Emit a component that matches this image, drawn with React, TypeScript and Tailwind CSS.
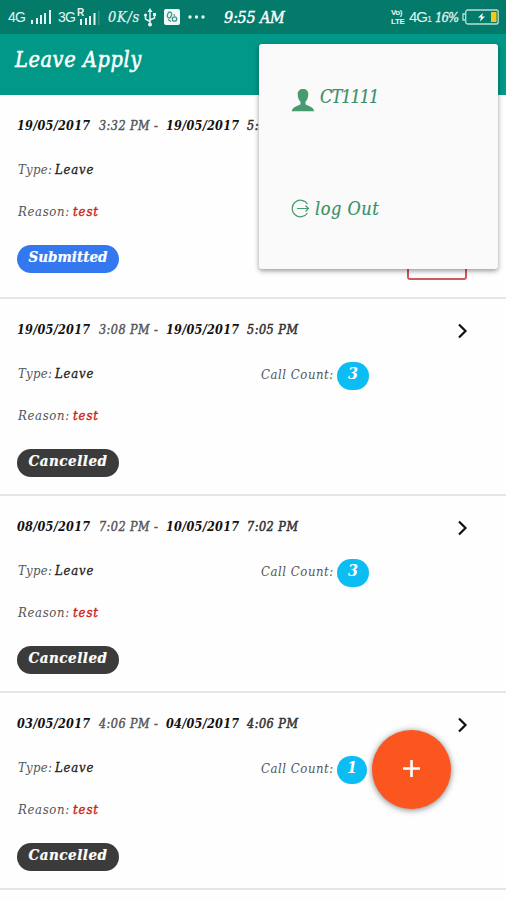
import React from 'react';

interface LeaveEntry {
    from: string;
    fromTime: string;
    to: string;
    toTime: string;
    status: 'Submitted' | 'Cancelled';
    calls?: number;
}

const LEAVES: LeaveEntry[] = [
    { from: '19/05/2017', fromTime: '3:32 PM -', to: '19/05/2017', toTime: '5:32 PM', status: 'Submitted' },
    { from: '19/05/2017', fromTime: '3:08 PM -', to: '19/05/2017', toTime: '5:05 PM', status: 'Cancelled', calls: 3 },
    { from: '08/05/2017', fromTime: '7:02 PM -', to: '10/05/2017', toTime: '7:02 PM', status: 'Cancelled', calls: 3 },
    { from: '03/05/2017', fromTime: '4:06 PM -', to: '04/05/2017', toTime: '4:06 PM', status: 'Cancelled', calls: 1 },
];

const StatusBar: React.FC = () => (
    <div className="flex h-[34px] items-center bg-[#047a6b] pl-2 pr-[7px] whitespace-nowrap text-[#e3f5f2]">
        <span className="w-[22px] font-['Liberation_Sans'] text-[14px] not-italic tracking-[-0.8px]">4G</span>
        <svg width="22" height="16" viewBox="0 0 22 16" fill="currentColor">
            <path d="M1 11h2v4H1zM6 9h2v6H6zM10 6h2v9h-2zM14 4h2v11h-2zM19 1h2v14h-2z" />
        </svg>
        <span className="ml-[6px] w-[18px] font-['Liberation_Sans'] text-[14px] not-italic tracking-[-0.8px]">3G</span>
        <div className="relative h-5 w-[26px]">
            <span className="absolute left-[1px] top-0 font-['Liberation_Sans'] text-[10px] leading-[11px] not-italic font-bold">R</span>
            <svg className="absolute left-0 top-0" width="24" height="20" fill="currentColor">
                <path d="M4 12h2v6H4zM9 11h2v7H9zM13 9h2v9h-2z" />
                <path d="M17.500 6h2v12h-2z" />
                <path opacity=".2" d="M22 4h1.500v14H22z" />
            </svg>
        </div>
        <span className="ml-[6px] w-[34px] pt-px text-[14.500px] tracking-[0.7px] [-webkit-text-stroke:0.2px]">0K/s</span>
        <svg className="ml-[1px]" width="14" height="19" viewBox="0 0 14 19" fill="none" stroke="currentColor" strokeWidth="1.500">
            <path d="M7 3v13M7 13.500L2.500 11V7.500M7 12l4.500-2V6.500" />
            <path d="M7 0l2.500 4h-5z" fill="currentColor" stroke="none" />
            <circle cx="7" cy="16.500" r="2" fill="currentColor" stroke="none" />
            <circle cx="2.500" cy="7" r="1.600" fill="currentColor" stroke="none" />
            <path d="M10 5h3v3h-3z" fill="currentColor" stroke="none" />
        </svg>
        <svg className="ml-[7px]" width="16" height="16" viewBox="0 0 16 16">
            <rect width="16" height="16" rx="2" fill="#f2fbfa" />
            <g fill="none" stroke="#3c9488" strokeWidth="1.300">
                <ellipse cx="5.500" cy="6" rx="2" ry="3" transform="rotate(15 5.500 6)" />
                <circle cx="10.500" cy="10" r="2.200" />
                <path d="M4 10.500l3 2M9.500 5.500l1.500 1" />
            </g>
        </svg>
        <svg className="ml-[8px]" width="17" height="4" viewBox="0 0 17 4" fill="currentColor">
            <circle cx="2" cy="2" r="1.700" />
            <circle cx="8.500" cy="2" r="1.700" />
            <circle cx="15" cy="2" r="1.700" />
        </svg>
        <span className="ml-[19px] pt-px text-[16px] tracking-[-0.2px] text-white [-webkit-text-stroke:0.4px]">9:55 AM</span>
        <div className="ml-auto flex items-center">
            <div className="flex w-[16px] flex-col font-['Liberation_Sans'] text-[8px] leading-[9px] font-bold not-italic tracking-[-0.4px]">
                <span>Vo)</span>
                <span>LTE</span>
            </div>
            <span className="ml-[2px] w-[24px] font-['Liberation_Sans'] text-[15px] not-italic tracking-[-1px]">
                4G<span className="text-[9px]">1</span>
            </span>
            <span className="ml-[2px] w-[24px] pt-px text-[13px] tracking-[-1px] [-webkit-text-stroke:0.3px]">16%</span>
            <svg className="ml-[3px]" width="37" height="16" viewBox="0 0 37 16" fill="none">
                <path d="M3 5H1v6h2" stroke="#b9ded8" strokeWidth="1.300" />
                <rect x="3.700" y="1" width="32.500" height="14" rx="2" stroke="#b9ded8" strokeWidth="1.300" />
                <rect x="29" y="3" width="5.500" height="10" fill="#f2c81c" />
                <path d="M21 4l-5 4.500h3l-1 4 5-5h-3z" fill="#fff" />
            </svg>
        </div>
    </div>
);

const LeaveRow: React.FC<{ leave: LeaveEntry; first: boolean }> = ({ leave, first }) => (
    <div className={`relative border-b-2 border-[#e6e6e6] px-[17px] pt-[21px] ${first ? 'h-[204px]' : 'h-[197px]'}`}>
        <div className="flex h-5 items-center text-[12.500px] whitespace-nowrap text-[#555]">
            <span className="w-[82px] font-bold tracking-[0.25px] text-[#111]">{leave.from}</span>
            <span className="w-[67px] tracking-[0.45px] [-webkit-text-stroke:0.4px]">{leave.fromTime}</span>
            <span className="w-[81px] font-bold tracking-[0.25px] text-[#111]">{leave.to}</span>
            <span className="tracking-[0.5px] text-[#333] [-webkit-text-stroke:0.5px]">{leave.toTime}</span>
            {!first && (
                <svg className="ml-auto mr-[21px] mt-[2px]" width="11" height="16" viewBox="0 0 11 16" fill="none" stroke="#111" strokeWidth="2.200">
                    <path d="M2 1.500L8.500 8 2 14.500" />
                </svg>
            )}
        </div>
        <div className="mt-6 flex h-5 items-center pl-px text-[13px] whitespace-nowrap text-[#555]">
            <span className="w-[37px] tracking-[0.3px]">Type:</span>
            <span className="w-[206px] tracking-[0.8px] text-[#222] [-webkit-text-stroke:0.3px]">Leave</span>
            {leave.calls && (
                <>
                    <span className="mt-[2px] w-[76px] tracking-[0.55px]">Call Count:</span>
                    <span className={`mt-[4px] flex h-[28px] shrink-0 justify-center rounded-full bg-[#0bbdf2] text-[16px] leading-[24px] font-bold text-white ${leave.calls === 1 ? 'w-[30px]' : 'w-[32px]'}`}>
                        {leave.calls}
                    </span>
                </>
            )}
        </div>
        <div className="mt-[22px] flex h-5 items-center pl-px text-[13px] whitespace-nowrap text-[#555]">
            <span className="w-[55px] tracking-[0.65px]">Reason:</span>
            <span className="tracking-[0.9px] text-[#cc1f1a] [-webkit-text-stroke:0.4px]">test</span>
        </div>
        <div className={`mt-[23px] flex h-[28px] w-[102px] justify-center rounded-full text-[15px] leading-[24px] font-bold text-white [-webkit-text-stroke:0.2px] ${leave.status === 'Submitted' ? 'bg-[#3478f0]' : 'bg-[#3b3b3b] tracking-[0.5px]'}`}>
            {leave.status}
        </div>
        {/* Cancel button, mostly hidden behind the open menu */}
        {first && <div className="absolute left-[407px] top-[152px] h-[33px] w-[60px] rounded-[3px] border-2 border-[#cf5a5f]" />}
    </div>
);

const AccountMenu: React.FC = () => (
    <div className="absolute left-[259px] top-[44px] h-[225px] w-[239px] rounded-[3px] bg-[#fafafa] pt-[38px] pl-[32px] text-[#3a8f68] shadow-[0_2px_5px_rgba(0,0,0,0.4)] [-webkit-text-stroke:0.2px]">
        <div className="flex h-7 items-center">
            <svg className="mt-[8px]" width="24" height="24" viewBox="0 0 24 24" fill="#489a70">
                <path d="M12 1c3.400 0 5.300 2 5.300 5.300 0 3.200-1.200 6-2.800 7.500v2.500c1.200 1.300 8 2.200 8.800 7H.7c.8-4.800 7.600-5.700 8.800-7v-2.500C7.900 12.300 6.700 9.500 6.700 6.300 6.700 3 8.600 1 12 1z" />
            </svg>
            <span className="ml-[5px] text-[18px] tracking-[-1px]">CT1111</span>
        </div>
        <div className="mt-[84px] flex h-7 items-center">
            <svg width="19" height="19" viewBox="0 0 19 19" fill="none" stroke="#489a70" strokeWidth="1.200">
                <path d="M16.500 5a8.300 8.300 0 1 0 0 9M6 9.500h11.500M14.500 6.500l3 3-3 3" />
            </svg>
            <span className="ml-[5px] text-[18px] tracking-[0.5px]">log Out</span>
        </div>
    </div>
);

const App: React.FC = () => (
    <div className="relative h-[900px] w-[506px] overflow-hidden bg-[#fefefe] font-['DejaVu_Serif_Condensed','DejaVu_Serif',serif] italic">
        <StatusBar />
        <header className="flex h-[61px] items-center bg-[#019887] pb-[8px] pl-[15px] text-[21.500px] tracking-[0.6px] text-white [-webkit-text-stroke:0.5px]">
            Leave Apply
        </header>
        <main>
            {LEAVES.map((leave, idx) => (
                <LeaveRow key={idx} leave={leave} first={idx === 0} />
            ))}
        </main>
        <AccountMenu />
        <button className="absolute left-[372px] top-[730px] flex size-[79px] items-center justify-center rounded-full bg-[#fc5620] shadow-[0_1px_6px_rgba(0,0,0,0.5)]">
            <svg className="-mt-[2px] mr-px" width="17" height="17" viewBox="0 0 17 17" stroke="#fff" strokeWidth="2.600">
                <path d="M8.500 0v17M0 8.500h17" />
            </svg>
        </button>
    </div>
);

export default App;
